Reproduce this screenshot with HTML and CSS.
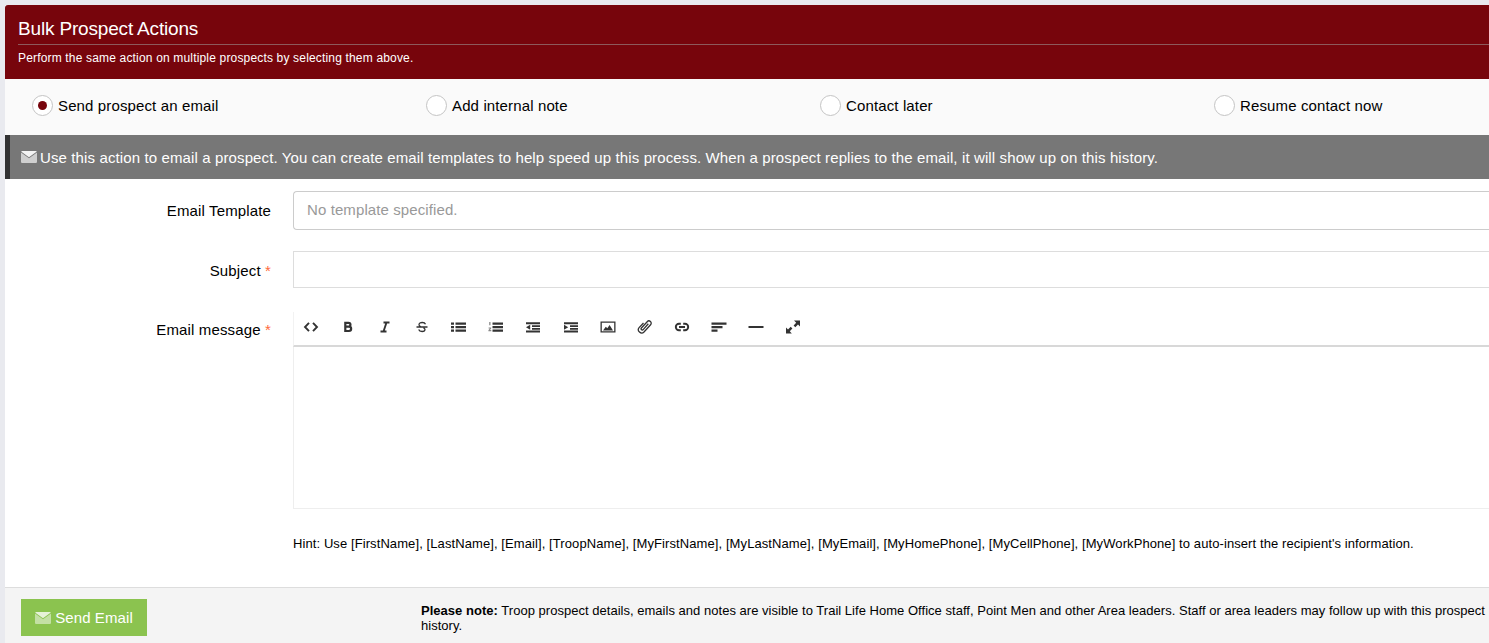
FILE: index.html
```html
<!DOCTYPE html>
<html lang="en">
<head>
<meta charset="utf-8">
<title>Bulk Prospect Actions</title>
<link rel="stylesheet" href="styles.css">
</head>
<body>
<main class="panel">
  <header class="head">
    <h2 class="title">Bulk Prospect Actions</h2>
    <p class="sub">Perform the same action on multiple prospects by selecting them above.</p>
  </header>
  <div class="choices">
    <label class="choice"><span class="radio on"></span>Send prospect an email</label>
    <label class="choice"><span class="radio"></span>Add internal note</label>
    <label class="choice"><span class="radio"></span>Contact later</label>
    <label class="choice"><span class="radio"></span>Resume contact now</label>
  </div>
  <div class="info">
    <svg class="env" viewBox="0 0 16 12"><path class="env-body" d="M0 1.500l8 5.800 8-5.800v9.200c0 .7-.6 1.300-1.300 1.300H1.300C.6 12 0 11.400 0 10.700z"/><path class="env-flap" d="M1.200 0h13.600c.5 0 .9.200 1.100.5L8 6.200.1.500C.3.200.7 0 1.200 0z"/></svg>
    Use this action to email a prospect. You can create email templates to help speed up this process. When a prospect replies to the email, it will show up on this history.
  </div>
  <form class="form">
    <div class="row row-template">
      <label class="lbl">Email Template</label>
      <div class="select">No template specified.</div>
    </div>
    <div class="row row-subject">
      <label class="lbl">Subject <span class="req">*</span></label>
      <div class="input"></div>
    </div>
    <div class="row row-msg">
      <label class="lbl lbl-msg">Email message <span class="req">*</span></label>
      <div class="editor">
        <div class="toolbar">
          <span class="tool"><svg viewBox="0 0 16 14"><path class="st" d="M6 2.800L2 7l4 4.200M10 2.800L14 7l-4 4.200"/></svg></span>
          <span class="tool"><svg viewBox="0 0 16 14"><path class="st bold" d="M5.300 2.800h3.200a1.900 1.900 0 010 3.900H5.300zM5.300 6.700h3.700a2.100 2.100 0 010 4.300H5.300zM4.300 2.800h1M4.300 11h1"/></svg></span>
          <span class="tool"><svg viewBox="0 0 16 14"><path class="st" d="M6.500 2.500h6M3.500 11.500h6M9.500 2.500L6.500 11.500"/></svg></span>
          <span class="tool"><svg viewBox="0 0 16 14"><path class="st thin" d="M11.500 4.300C11 3 10 2.500 8.300 2.500 6.400 2.500 5 3.300 5 4.700c0 1 .6 1.500 1.800 1.900M9.400 7.800c1 .4 1.600 1 1.600 1.800 0 1.200-1.200 1.900-2.900 1.900-1.800 0-3-.7-3.400-2M2.500 7h11"/></svg></span>
          <span class="tool"><svg viewBox="0 0 16 14"><path class="fl" d="M0 2.500h3v2.200H0zM0 6h3v2.200H0zM0 9.500h3v2.200H0zM4.500 2.500H15v2.200H4.500zM4.500 6H15v2.200H4.500zM4.500 9.500H15v2.200H4.500z"/></svg></span>
          <span class="tool"><svg viewBox="0 0 16 14"><path class="num" d="M1.200 2H2.500v3.200H1.200zM.6 7.400h2.600v1L2 10h1.300v1.200H.4v-1L1.800 8.500H.6z"/><path class="fl" d="M4.500 2.500H15v2.200H4.500zM4.500 6H15v2.200H4.500zM4.500 9.500H15v2.200H4.500z"/></svg></span>
          <span class="tool"><svg viewBox="0 0 16 14"><path class="fl" d="M1 2.300h14v1.900H1zM7 5.300h8v1.700H7zM7 8h8v1.700H7zM1 10.600h14v1.900H1zM5.200 4.700v5L1 7.200z"/></svg></span>
          <span class="tool"><svg viewBox="0 0 16 14"><path class="fl" d="M1 2.300h14v1.900H1zM7 5.300h8v1.700H7zM7 8h8v1.700H7zM1 10.600h14v1.900H1zM1 4.700v5l4.200-2.500z"/></svg></span>
          <span class="tool"><svg viewBox="0 0 16 14"><path class="fl" fill-rule="evenodd" d="M.5 1.500h15v11H.5zM1.800 2.800v8.400h12.400V2.800z"/><path class="fl" d="M3 10.400l2.800-3.700 1.500 1.500L9.600 5l3.400 5.400z"/></svg></span>
          <span class="tool"><svg viewBox="0 0 16 14"><path class="st thin" d="M11.300 3.800L6.200 9.600a1.200 1.200 0 01-1.800-1.600l5.800-6.300a2.300 2.300 0 013.400 3.100L7 12a3.300 3.300 0 01-4.900-4.400L6.500 3"/></svg></span>
          <span class="tool"><svg viewBox="0 0 16 14"><path class="st" d="M6.800 3.800H5a3.200 3.200 0 000 6.400h1.800M9.200 3.800H11a3.200 3.200 0 010 6.400H9.200M5 7h6"/></svg></span>
          <span class="tool"><svg viewBox="0 0 16 14"><path class="fl" d="M.5 2.500h15v2.200H.5zM.5 6h11v2.200H.5zM.5 9.500h6v2.200H.5z"/></svg></span>
          <span class="tool"><svg viewBox="0 0 16 14"><path class="fl" d="M.5 6h15v2H.5z"/></svg></span>
          <span class="tool"><svg viewBox="0 0 16 14"><path class="fl" d="M9 .5h6V6.500L13 4.500 10.300 7.200 8.600 5.500 11.200 2.700zM1 7.500l2 2 2.700-2.700 1.700 1.700L4.800 11.300 6.800 13.500H1z"/></svg></span>
        </div>
        <div class="body"></div>
      </div>
    </div>
    <p class="hint">Hint: Use [FirstName], [LastName], [Email], [TroopName], [MyFirstName], [MyLastName], [MyEmail], [MyHomePhone], [MyCellPhone], [MyWorkPhone] to auto-insert the recipient's information.</p>
  </form>
  <footer class="foot">
    <button class="send" type="button">
      <svg class="env" viewBox="0 0 16 12"><path class="env-body" d="M0 1.500l8 5.800 8-5.800v9.200c0 .7-.6 1.300-1.300 1.300H1.300C.6 12 0 11.400 0 10.700z"/><path class="env-flap" d="M1.200 0h13.600c.5 0 .9.200 1.100.5L8 6.200.1.500C.3.200.7 0 1.200 0z"/></svg>
      Send Email
    </button>
    <p class="note"><b>Please note:</b> Troop prospect details, emails and notes are visible to Trail Life Home Office staff, Point Men and other Area leaders. Staff or area leaders may follow up with this prospect history.</p>
  </footer>
</main>
</body>
</html>
```
FILE: styles.css
```css
* { box-sizing: border-box; }
html, body { height: 100%; overflow: hidden; }
body {
  margin: 0;
  padding: 5px 0 0 5px;
  background: #e9eaef;
  font-family: "Liberation Sans", Arial, sans-serif;
  color: #000;
}
.panel { background: #fff; }
.head {
  height: 74px;
  background: #77050c;
  color: #fff;
  padding: 13px 0 0 13px;
  border-radius: 3px 0 0 0;
}
.title {
  margin: 0;
  font-size: 19px;
  font-weight: 400;
  line-height: 21px;
  height: 27px;
  letter-spacing: -.17px;
  border-bottom: 1px solid #8d5a5c;
}
.sub { margin: 6px 0 0; font-size: 12px; line-height: 14px; letter-spacing: .17px; }
.choices {
  height: 56px;
  background: #fafafa;
  padding: 0 0 4px 27px;
  display: grid;
  grid-template-columns: repeat(4, 394px);
  align-items: center;
}
.choice { display: flex; align-items: center; font-size: 15px; gap: 5px; letter-spacing: .13px; }
.radio {
  width: 21px;
  height: 21px;
  border-radius: 50%;
  background: #fff;
  border: 1px solid #c4c4c4;
  display: flex;
  align-items: center;
  justify-content: center;
}
.radio.on::after {
  content: "";
  width: 9px;
  height: 9px;
  border-radius: 50%;
  background: #77050c;
}
.info {
  height: 44px;
  background: #777;
  border-left: 5px solid #333;
  color: #fff;
  font-size: 15px;
  letter-spacing: .12px;
  padding-left: 11px;
  display: flex;
  align-items: center;
  gap: 3px;
  white-space: nowrap;
}
.env { width: 16px; height: 12px; flex: none; }
.env-flap { fill: #f4f4f4; }
.env-body { fill: #cfcfcf; }
.form { height: 408px; padding-top: 12px; }
.row { display: flex; }
.lbl {
  width: 266px;
  flex: none;
  text-align: right;
  font-size: 15px;
  line-height: 39px;
  letter-spacing: .14px;
}
.req { color: #ff6a3c; }
.row-subject { margin-top: 21px; }
.row-msg { margin-top: 22px; }
.lbl-msg { line-height: 36px; }
.select {
  margin-left: 22px;
  flex: 1;
  height: 39px;
  border: 1px solid #ccc;
  border-right: 0;
  border-radius: 4px 0 0 4px;
  color: #999;
  font-size: 15px;
  letter-spacing: .1px;
  line-height: 35px;
  padding-left: 13px;
}
.input {
  margin-left: 22px;
  flex: 1;
  height: 37px;
  border: 1px solid #ddd;
  border-right: 0;
}
.editor { margin-left: 22px; flex: 1; }
.toolbar {
  height: 35px;
  border-left: 1px solid #f2f2f2;
  border-bottom: 2px solid #d8d8d8;
  display: flex;
  align-items: center;
  padding: 0 0 4px 9px;
  gap: 21.08px;
}
.tool { width: 16px; height: 16px; display: flex; align-items: center; justify-content: center; }
.tool svg { width: 16px; height: 14px; }
.st { fill: none; stroke: #333; stroke-width: 1.900; }
.st.thin { stroke-width: 1.300; }
.st.bold { stroke-width: 2.200; }
.fl { fill: #333; }
.num { fill: #888; }
.body { height: 162px; border-left: 1px solid #eee; border-bottom: 1px solid #eee; }
.hint { margin: 28px 0 0 288px; font-size: 13px; line-height: 14px; letter-spacing: .09px; white-space: nowrap; }
.foot {
  height: 60px;
  background: #f4f4f4;
  border-top: 1px solid #ddd;
  display: flex;
  padding: 11px 0 0 16px;
}
.send {
  width: 126px;
  height: 37px;
  border: 0;
  background: #8bc34f;
  color: #fff;
  font: 15px "Liberation Sans", Arial, sans-serif;
  letter-spacing: .1px;
  display: flex;
  align-items: center;
  justify-content: center;
  gap: 4px;
  padding: 0;
}
.send .env-flap { fill: #e6f2d8; }
.send .env-body { fill: #c3e0a4; }
.note { margin: 4px 0 0 274px; width: 1067px; font-size: 13px; line-height: 15px; letter-spacing: .025px; }
```
